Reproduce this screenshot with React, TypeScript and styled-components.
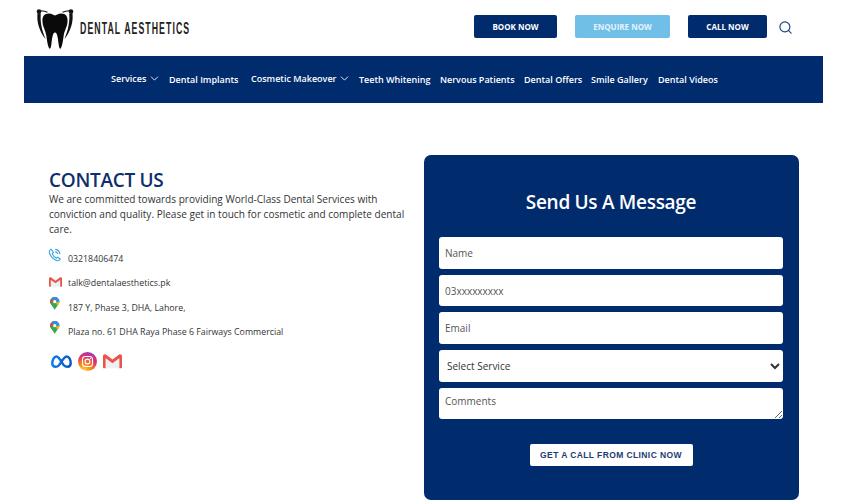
import React from "react";
import styled, { createGlobalStyle } from "styled-components";
import { ChevronDown, Search } from "lucide-react";

const NAVY = "#002b6d";

const Global = createGlobalStyle`
  html, body { margin: 0; padding: 0; background: #fff; }
  body { font-family: "Open Sans", "Noto Sans", sans-serif; color: #333; }
  * { box-sizing: border-box; }
`;

const Page = styled.div`
  width: 846px;
  height: 500px;
  overflow: hidden;
  background: #fff;
`;

const TopBar = styled.header`
  height: 56px;
  display: flex;
  align-items: center;
  padding: 0 53px 0 36px;
`;

const Brand = styled.div`
  display: flex;
  align-items: center;
  gap: 6px;
  margin-right: auto;
  padding-top: 2px;
`;

const BrandName = styled.span`
  display: inline-block;
  width: 110px;
  font-family: "Liberation Sans", Arial, sans-serif;
  font-size: 16.5px;
  font-weight: 700;
  letter-spacing: 2px;
  color: #222;
  white-space: nowrap;
  margin-bottom: 1px;
  transform: scaleX(0.53);
  transform-origin: left center;
`;

const TopActions = styled.div`
  display: flex;
  align-items: center;
  padding-bottom: 3px;
`;

const CtaButton = styled.a<{ $light?: boolean; $w: number; $gap: number }>`
  width: ${(p) => p.$w}px;
  height: 23px;
  margin-right: ${(p) => p.$gap}px;
  display: flex;
  align-items: center;
  justify-content: center;
  border-radius: 2px;
  background: ${(p) => (p.$light ? "#70bfe6" : NAVY)};
  color: ${(p) => (p.$light ? "#e4f3fb" : "#fff")};
  font-size: 8px;
  font-weight: 700;
  white-space: nowrap;
`;

const SearchIcon = styled(Search)`
  color: #1f4680;
  display: block;
  margin-top: 1px;
`;

const MainNav = styled.nav`
  width: 799px;
  height: 47px;
  margin-left: 24px;
  background: ${NAVY};
  display: flex;
  align-items: center;
  padding: 0 0 0 87px;
`;

const NavItem = styled.a<{ $w: number; $raised?: boolean }>`
  width: ${(p) => p.$w}px;
  display: flex;
  align-items: center;
  gap: 2px;
  color: #fff;
  font-size: 9px;
  font-weight: 600;
  white-space: nowrap;
  position: relative;
  top: ${(p) => (p.$raised ? "-1px" : "0")};
`;

const Content = styled.main`
  display: flex;
  padding: 52px 47px 0 49px;
  align-items: flex-start;
`;

const InfoColumn = styled.section`
  width: 375px;
  flex: none;
  padding-top: 13px;
`;

const Heading = styled.h1`
  margin: 0;
  font-size: 19px;
  line-height: 24px;
  font-weight: 600;
  color: #0e2f6c;
  letter-spacing: -0.3px;
`;

const Intro = styled.p`
  margin: 0 0 9.5px;
  width: 360px;
  font-size: 10.05px;
  line-height: 15px;
  color: #333;
`;

const ContactRow = styled.div`
  display: flex;
  align-items: flex-start;
  height: 24.5px;
  font-size: 8.8px;
  color: #333;
`;

const RowIcon = styled.span<{ $drop: number }>`
  width: 14px;
  flex: none;
  display: flex;
  justify-content: center;
  margin: 0 6px 0 -1px;
  padding-top: ${(p) => p.$drop}px;
`;

const RowText = styled.span`
  padding-top: 6px;
  line-height: 12px;
  white-space: nowrap;
`;

const Socials = styled.div`
  display: flex;
  align-items: center;
  gap: 6px;
  margin-top: 7.5px;
  margin-left: 2px;
`;

const FormPanel = styled.form`
  width: 375px;
  height: 345px;
  flex: none;
  background: ${NAVY};
  border-radius: 7px;
  padding: 0 16px 0 15px;
  display: flex;
  flex-direction: column;
`;

const FormTitle = styled.h2`
  margin: 33px 0 21px;
  height: 28px;
  line-height: 28px;
  text-align: center;
  color: #fff;
  font-size: 19px;
  font-weight: 600;
  letter-spacing: -0.3px;
`;

const fieldCss = `
  display: block;
  width: 100%;
  height: 31.7px;
  border: none;
  border-radius: 3px;
  background: #fff;
  font-family: "Open Sans", "Noto Sans", sans-serif;
  font-size: 10px;
  color: #333;
  outline: none;
  margin-bottom: 6px;
  &::placeholder { color: #555; opacity: 1; }
`;

const Field = styled.input`
  ${fieldCss}
  padding: 0 6px;
`;

const ServiceSelect = styled.select`
  ${fieldCss}
  padding: 0 4px;
`;

const Comments = styled.textarea`
  ${fieldCss}
  padding: 6px 6px;
  margin-bottom: 0;
  line-height: 14px;
  resize: vertical;
`;

const SubmitRow = styled.div`
  display: flex;
  justify-content: center;
  margin-top: 25px;
`;

const SubmitButton = styled.button`
  width: 163px;
  height: 22px;
  border: none;
  border-radius: 2px;
  background: #fff;
  color: #1c3c72;
  font-family: "Liberation Sans", Arial, sans-serif;
  font-size: 8.5px;
  font-weight: 700;
  letter-spacing: 0.4px;
  padding: 0;
  white-space: nowrap;
`;

const ToothLogo = () => (
  <svg width="38" height="42" viewBox="0 0 38 42" aria-hidden="true">
    <circle cx="3" cy="3.5" r="2.3" fill="#111" />
    <circle cx="35" cy="3.5" r="2.3" fill="#111" />
    <path d="M1.6 5 C0.4 13 3 23 9.5 31 C5.8 22 4 14 4.8 5.6 Z" fill="#111" />
    <path d="M36.4 5 C37.6 13 35 23 28.5 31 C32.2 22 34 14 33.2 5.6 Z" fill="#111" />
    <path d="M4.5 2.8 C7 3 9.5 3.4 11.5 4.2 M33.5 2.8 C31 3 28.5 3.4 26.5 4.2" stroke="#111" strokeWidth="1.1" fill="none" />
    <path d="M13 5.6 C16 5.6 17.5 7.4 19 7.4 C20.5 7.4 22 5.6 25 5.6 C30 5.6 32 9 31.5 14 C31 19.5 28.5 22 27.6 28 C27 33 26 39 24.6 40.5 C23.5 41.5 23 39 22.6 36 C22 31 21.4 24.5 19 24.5 C16.6 24.5 16 31 15.4 36 C15 39 14.5 41.5 13.4 40.5 C12 39 11 33 10.4 28 C9.5 22 7 19.5 6.5 14 C6 9 8 5.6 13 5.6Z" fill="#0a0a0a" />
  </svg>
);

const PhoneIcon = () => (
  <svg width="14" height="14" viewBox="0 0 14 14" fill="none" stroke="#3aa5de" strokeWidth="1.1" aria-hidden="true">
    <path d="M3 1.2 C1.6 1.8 1 3 1.5 5 C2.3 8 5.5 11.6 9 12.6 C10.6 13 11.7 12.3 12.2 11 L9.8 9.2 L8.6 10.2 C7 9.6 4.8 7.2 4.3 5.6 L5.4 4.4 Z" />
    <path d="M7.2 1.4 C9.6 1.6 11.6 3.6 12 6.2 M7.2 3.6 C8.6 3.8 9.6 4.8 9.9 6.2" />
  </svg>
);

const GmailIcon = ({ size = 14 }: { size?: number }) => (
  <svg width={size} height={size * 0.78} viewBox="0 0 18 14" aria-hidden="true">
    <path d="M2.6 13.5 V4.2 L9 8.9 L15.4 4.2 V13.5Z" fill="#eef0f3" />
    <path d="M2.5 13.5 V4 L9 8.8 L15.5 4 V13.5 H17 C17.6 13.5 18 13.1 18 12.5 V2 C18 0.5 16.2 -0.3 15 0.6 L9 5.2 L3 0.6 C1.8 -0.3 0 0.5 0 2 V12.5 C0 13.1 0.4 13.5 1 13.5Z" fill="#e8544a" />
  </svg>
);

const MapPin = () => (
  <svg width="9.5" height="13" viewBox="0 0 10 14" aria-hidden="true">
    <path d="M5 0 C2.2 0 0 2.2 0 5 C0 8 3.4 10 5 14 C6.6 10 10 8 10 5 C10 2.2 7.8 0 5 0Z" fill="#34a853" />
    <path d="M1.2 1.8 C2.2 0.6 3.5 0 5 0 L5 3.2 Z" fill="#4285f4" />
    <path d="M5 0 C7.8 0 10 2.2 10 5 L6.6 5 C6.6 4 6 3.4 5 3.2Z" fill="#4285f4" />
    <path d="M0 5 C0 3.8 0.4 2.7 1.2 1.8 L3.6 4.2 L0.6 7 C0.2 6.4 0 5.7 0 5Z" fill="#ea4335" />
    <path d="M10 5 C10 6.8 8.8 8.2 7.6 9.5 L6.4 6 Z" fill="#fbbc04" />
    <circle cx="5" cy="5" r="1.7" fill="#fff" />
  </svg>
);

const MetaIcon = () => (
  <svg width="21" height="13" viewBox="0 0 21 13" fill="none" aria-hidden="true">
    <defs>
      <linearGradient id="metaG" x1="0" y1="0" x2="1" y2="0">
        <stop offset="0" stopColor="#0a7cf0" />
        <stop offset="1" stopColor="#0a55c8" />
      </linearGradient>
    </defs>
    <path d="M1.3 8.6 C1.3 5 3 1.5 5.4 1.5 C8 1.5 11 8.2 12.8 10.3 C14 11.6 15 11.8 16.4 11.8 C18.4 11.8 19.7 10.4 19.7 8 C19.7 4.6 17.9 1.5 15.6 1.5 C13 1.5 10 8 8 10.2 C6.9 11.4 5.9 11.8 4.6 11.8 C2.6 11.8 1.3 10.7 1.3 8.6Z" stroke="url(#metaG)" strokeWidth="2.4" />
  </svg>
);

const InstagramIcon = () => (
  <svg width="19" height="19" viewBox="0 0 19 19" fill="none" aria-hidden="true">
    <defs>
      <radialGradient id="igG" cx="0.3" cy="1" r="1.1">
        <stop offset="0" stopColor="#fdd835" />
        <stop offset="0.4" stopColor="#f77f1e" />
        <stop offset="0.7" stopColor="#e0306e" />
        <stop offset="1" stopColor="#8a3ac4" />
      </radialGradient>
    </defs>
    <circle cx="9.5" cy="9.5" r="9.5" fill="url(#igG)" />
    <rect x="4.5" y="4.5" width="10" height="10" rx="2.8" stroke="#fff" strokeWidth="1.1" />
    <circle cx="9.5" cy="9.5" r="2.4" stroke="#fff" strokeWidth="1.1" />
    <circle cx="12.5" cy="6.5" r="0.7" fill="#fff" />
  </svg>
);

const navItems = [
  { label: "Services", w: 58, chevron: true, raised: true },
  { label: "Dental Implants", w: 82 },
  { label: "Cosmetic Makeover", w: 108, chevron: true, raised: true },
  { label: "Teeth Whitening", w: 81 },
  { label: "Nervous Patients", w: 84 },
  { label: "Dental Offers", w: 67 },
  { label: "Smile Gallery", w: 67 },
  { label: "Dental Videos", w: 62 },
];

const contacts = [
  { icon: <PhoneIcon />, drop: 1, text: "03218406474" },
  { icon: <GmailIcon size={13} />, drop: 6, text: "talk@dentalaesthetics.pk" },
  { icon: <MapPin />, drop: 1, text: "187 Y, Phase 3, DHA, Lahore," },
  { icon: <MapPin />, drop: 1, text: "Plaza no. 61 DHA Raya Phase 6 Fairways Commercial" },
];

export default function App() {
  return (
    <Page>
      <Global />
      <TopBar>
        <Brand>
          <ToothLogo />
          <BrandName>DENTAL AESTHETICS</BrandName>
        </Brand>
        <TopActions>
          <CtaButton $w={83} $gap={18}>BOOK NOW</CtaButton>
          <CtaButton $w={95} $gap={18} $light>ENQUIRE NOW</CtaButton>
          <CtaButton $w={79} $gap={11}>CALL NOW</CtaButton>
          <SearchIcon size={15} strokeWidth={1.9} />
        </TopActions>
      </TopBar>
      <MainNav>
        {navItems.map((n) => (
          <NavItem key={n.label} $w={n.w} $raised={n.raised}>
            {n.label}
            {n.chevron && <ChevronDown size={13} strokeWidth={1.6} />}
          </NavItem>
        ))}
      </MainNav>
      <Content>
        <InfoColumn>
          <Heading>CONTACT US</Heading>
          <Intro>
            We are committed towards providing World-Class Dental Services with conviction and quality. Please get in touch for cosmetic and complete dental care.
          </Intro>
          {contacts.map((c) => (
            <ContactRow key={c.text}>
              <RowIcon $drop={c.drop}>{c.icon}</RowIcon>
              <RowText>{c.text}</RowText>
            </ContactRow>
          ))}
          <Socials>
            <MetaIcon />
            <InstagramIcon />
            <GmailIcon size={19} />
          </Socials>
        </InfoColumn>
        <FormPanel>
          <FormTitle>Send Us A Message</FormTitle>
          <Field placeholder="Name" />
          <Field placeholder="03xxxxxxxxx" />
          <Field placeholder="Email" />
          <ServiceSelect defaultValue="">
            <option value="">Select Service</option>
          </ServiceSelect>
          <Comments placeholder="Comments" />
          <SubmitRow>
            <SubmitButton type="button">GET A CALL FROM CLINIC NOW</SubmitButton>
          </SubmitRow>
        </FormPanel>
      </Content>
    </Page>
  );
}
